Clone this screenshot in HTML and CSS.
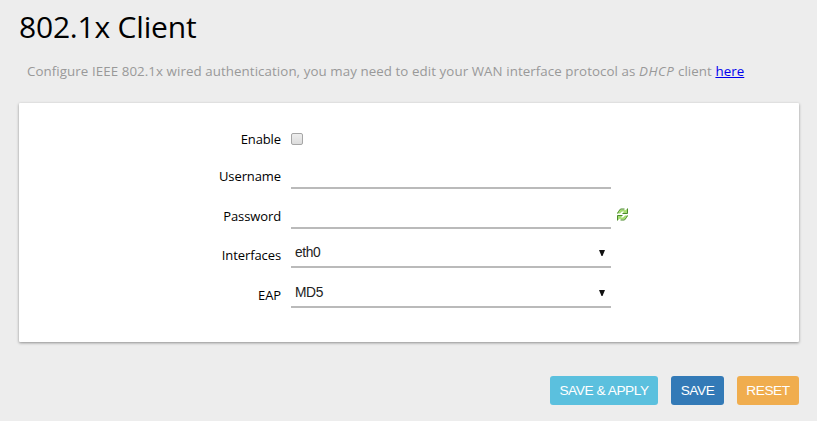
FILE: index.html
```html
<!DOCTYPE html>
<html lang="en">
<head>
<meta charset="utf-8">
<title>802.1x Client</title>
<link rel="stylesheet" href="styles.css">
</head>
<body>
<main class="page">
  <h1 class="title">802.1x Client</h1>
  <p class="intro">Configure IEEE 802.1x wired authentication, you may need to edit your WAN interface protocol as <em>DHCP</em> client <a href="#">here</a></p>
  <form class="card">
    <label class="label" for="enable">Enable</label>
    <div class="cell"><input class="check" type="checkbox" id="enable"></div>
    <label class="label" for="user">Username</label>
    <div class="cell"><input class="field" type="text" id="user"></div>
    <label class="label" for="pass">Password</label>
    <div class="cell"><input class="field" type="password" id="pass">
      <svg class="refresh" viewBox="0 0 11 13" width="11" height="13">
        <path d="M.5 5.5V4.500L3.500 1.500H7L8 2.500L10.500 .500V5.500H5.500L7 3.500H5L3 5.500Z" fill="#a4dc70"/>
        <path d="M.5 5.500L1.500 3.500L3.500 1H7.500M10.500 .500V5.500H5.500" fill="none" stroke="#4b8a2c"/>
        <path d="M10.500 7.500V8.500L7.500 11.500H4L3 10.500L.500 12.500V7.500H5.500L4 9.500H6L8 7.500Z" fill="#a4dc70"/>
        <path d="M10.500 7.500L9.500 9.500L7.500 12H3.500M.500 12.500V7.500H5.500" fill="none" stroke="#4b8a2c"/>
      </svg>
    </div>
    <label class="label">Interfaces</label>
    <div class="cell"><div class="field select"><span class="value">eth0</span><svg class="arrow" viewBox="0 0 6 6" width="6" height="6"><path d="M0 0H6L3.500 6H2.500Z"/></svg></div></div>
    <label class="label">EAP</label>
    <div class="cell"><div class="field select"><span class="value">MD5</span><svg class="arrow" viewBox="0 0 6 6" width="6" height="6"><path d="M0 0H6L3.500 6H2.500Z"/></svg></div></div>
  </form>
  <div class="actions">
    <button class="btn apply">SAVE &amp; APPLY</button>
    <button class="btn save">SAVE</button>
    <button class="btn reset">RESET</button>
  </div>
</main>
</body>
</html>
```
FILE: styles.css
```css
* { box-sizing: border-box; }
body {
  margin: 0;
  height: 421px;
  overflow: hidden;
  background: #ededed;
  color: #000;
  font-family: "Open Sans", "Noto Sans", sans-serif;
  font-size: 13px;
}
.page { padding: 7px 18px 0 19px; }
.title {
  margin: 0;
  height: 40px;
  font-size: 30px;
  font-weight: 400;
  line-height: 40px;
  letter-spacing: -0.2px;
  white-space: nowrap;
}
.intro {
  margin: 14px 0 0 8px;
  height: 20px;
  font-size: 13.33px;
  line-height: 20px;
  color: #999;
  white-space: nowrap;
  letter-spacing: 0.07px;
}
.intro em { letter-spacing: 0.5px; }
.intro a { color: #00e; }
.card {
  display: grid;
  grid-template-columns: 262px 1fr;
  grid-template-rows: 49px 37px 40px 39px 40px;
  column-gap: 10px;
  height: 239px;
  margin-top: 22px;
  background: #fff;
  border-radius: 1px;
  box-shadow: 0 1px 3px rgba(0, 0, 0, .4);
}
.label {
  align-self: end;
  line-height: 26px;
  letter-spacing: -0.1px;
  text-align: right;
}
.cell { display: flex; align-items: flex-end; }
.check {
  appearance: none;
  width: 12px;
  height: 12px;
  margin: 0 0 7px;
  border: 1px solid #a6a6a6;
  border-radius: 2px;
  background: linear-gradient(#eee, #dcdcdc);
}
.field {
  width: 320px;
  height: 32px;
  padding: 0 4px;
  border: 0;
  border-bottom: 2px solid #bababa;
  background: transparent;
  outline: 0;
}
.select {
  display: flex;
  justify-content: space-between;
  align-items: center;
  padding: 2px 6px 0 4px;
  color: #222;
  font: 13.8px/16px "Liberation Sans", sans-serif;
  letter-spacing: -0.4px;
}
.value { padding-top: 2px; }
.arrow { fill: #111; margin-top: 2px; }
.refresh { margin: 0 0 8px 6px; }
.actions {
  display: flex;
  justify-content: flex-end;
  gap: 13px;
  margin-top: 34px;
}
.btn {
  height: 29px;
  padding: 0 0 1px;
  border: 0;
  border-radius: 3px;
  color: #fff;
  font: 13.7px "Liberation Sans", sans-serif;
  letter-spacing: -0.45px;
  white-space: nowrap;
}
.apply { width: 108px; background: #5bc0de; }
.save { width: 53px; background: #337ab7; }
.reset { width: 62px; background: #f0ad4e; }
```
